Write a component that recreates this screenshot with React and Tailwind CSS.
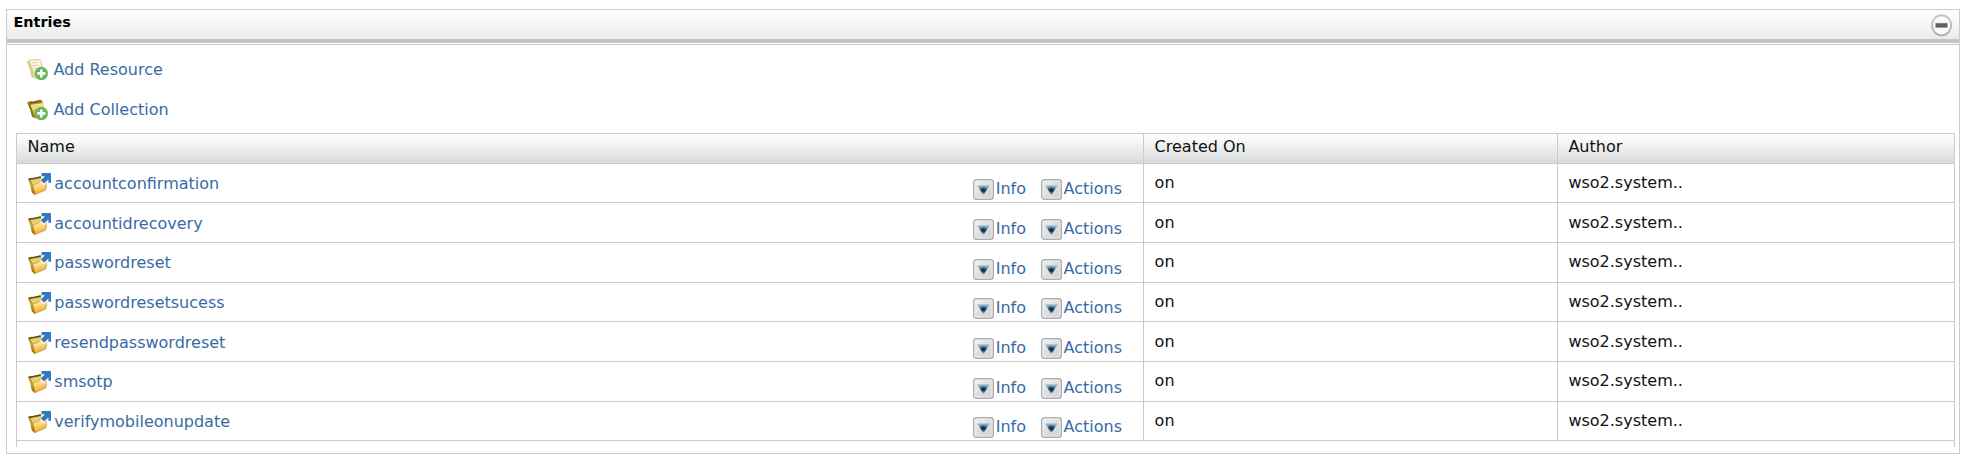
const entries = [
  'accountconfirmation',
  'accountidrecovery',
  'passwordreset',
  'passwordresetsucess',
  'resendpasswordreset',
  'smsotp',
  'verifymobileonupdate',
];

function PlusBadge() {
  return (
    <g>
      <circle cx="14.3" cy="14.4" r="6.7" fill="#64b958" />
      <path d="M14.3 10.4v8M10.3 14.4h8" stroke="#fff" strokeWidth="2.6" />
    </g>
  );
}

function ResourceIcon() {
  return (
    <svg width="21" height="21" viewBox="0 0 21 21" className="shrink-0">
      <defs>
        <linearGradient id="paper" x1="0" y1="0" x2="1" y2="1">
          <stop offset="0" stopColor="#f6edc2" />
          <stop offset="0.5" stopColor="#fdf6e4" />
          <stop offset="1" stopColor="#ead58c" />
        </linearGradient>
      </defs>
      <path d="M0.4 2.8L3 1.2L12 0.4L13.6 1.6L16 11L8.4 19.2L4.6 17.6L3.8 12Z" fill="url(#paper)" stroke="#d2bf86" strokeWidth="0.8" />
      <path d="M0.4 2.8L2.8 2.2L6.4 12L8 18.8L4.6 17.6L3.8 12Z" fill="#dccb8c" />
      <path d="M5 4l6-0.6M5.7 6.8l6-0.6M6.5 9.6l4-0.4" stroke="#eccaa8" strokeWidth="0.9" />
      <PlusBadge />
    </svg>
  );
}

function CollectionIcon() {
  return (
    <svg width="21" height="21" viewBox="0 0 21 21" className="shrink-0">
      <defs>
        <linearGradient id="collection" x1="0" y1="0" x2="0" y2="1">
          <stop offset="0" stopColor="#f3e28a" />
          <stop offset="0.6" stopColor="#dfb443" />
          <stop offset="1" stopColor="#b9801c" />
        </linearGradient>
      </defs>
      <path d="M0.2 3.2L4 1.8L6 2.4L13 0.4L15.5 2L16.4 10L8.2 19.2L5 17.6L3.4 11Z" fill="#b9952e" />
      <path d="M0.2 3.2L3.6 4.8L8.2 19.2L5 17.6L3.4 11Z" fill="#94731a" />
      <path d="M1.6 3.6L13.5 1.4L15 2.6L4.4 4.8Z" fill="#6b5614" />
      <path d="M3.6 6L16.8 4.2L16.4 11L8.2 19.2Z" fill="url(#collection)" />
      <path d="M4.2 6.6L16.4 4.8M5 9.2L15 7.8" stroke="#faf0b8" strokeWidth="0.9" />
      <PlusBadge />
    </svg>
  );
}

function FolderLinkIcon() {
  return (
    <svg width="23" height="22" viewBox="0 0 23 22" className="block shrink-0">
      <defs>
        <linearGradient id="folder" x1="0" y1="0" x2="0.2" y2="1">
          <stop offset="0" stopColor="#fff3c4" />
          <stop offset="0.45" stopColor="#fdda80" />
          <stop offset="1" stopColor="#f3a61a" />
        </linearGradient>
        <linearGradient id="folderBack" x1="0" y1="0" x2="0" y2="1">
          <stop offset="0" stopColor="#8f7a1c" />
          <stop offset="0.5" stopColor="#c9a638" />
          <stop offset="1" stopColor="#8a6410" />
        </linearGradient>
      </defs>
      <path d="M7 21.8L17.8 18L19.6 12L8 20Z" fill="#bdbdbd" opacity="0.7" />
      <path d="M0.1 5.8L3.6 4.8L5.2 5.4L12.8 3.2L14 9L6.8 22L3.8 19.6L2.4 13Z" fill="url(#folderBack)" />
      <path d="M2.4 7.2L12.8 5L14 10L5 12Z" fill="#e5d170" />
      <path d="M0.6 6.3L12.8 4" stroke="#5f4f12" strokeWidth="1.3" />
      <path d="M4.8 11.6L10 10.6L11.4 9L18.8 8L17.6 16.4L7 21.5Z" fill="url(#folder)" stroke="#c98c24" strokeWidth="0.6" />
      <path d="M12.8 0H23V11L20 8.4L16.2 12L12 8.4L15.4 4.4Z" fill="#fff" />
      <path d="M13.6 0H23V9.8H20.4V6.4L16.2 10.6L12.8 7.6L17 3.2H13.6Z" fill="#3079be" />
    </svg>
  );
}

function DropIcon() {
  return (
    <svg width="21" height="21" viewBox="0 0 21 21" className="block shrink-0">
      <defs>
        <linearGradient id="button" x1="0" y1="0" x2="1" y2="1">
          <stop offset="0" stopColor="#f4f4f4" />
          <stop offset="0.5" stopColor="#dedede" />
          <stop offset="1" stopColor="#d2d2d2" />
        </linearGradient>
        <radialGradient id="arrow" cx="0.5" cy="0.52" r="0.5">
          <stop offset="0" stopColor="#07121c" />
          <stop offset="0.35" stopColor="#27465c" />
          <stop offset="1" stopColor="#8fbad6" />
        </radialGradient>
      </defs>
      <rect x="0.7" y="0.7" width="19.6" height="19.6" rx="2.6" fill="url(#button)" stroke="#adadad" strokeWidth="1.4" />
      <rect x="2" y="2" width="17" height="17" rx="1.2" fill="none" stroke="#f0f0f0" strokeWidth="0.8" />
      <path d="M4.4 6.8H16.4L11 15.4H9.8Z" fill="url(#arrow)" />
      <path d="M4.8 7.2H16" stroke="#86b0cc" strokeWidth="1.2" />
    </svg>
  );
}

function CollapseIcon() {
  return (
    <svg width="22" height="23" viewBox="0 0 22 23" className="block">
      <defs>
        <linearGradient id="ring" x1="0" y1="0" x2="0" y2="1">
          <stop offset="0" stopColor="#c6c7c8" />
          <stop offset="1" stopColor="#a9abad" />
        </linearGradient>
      </defs>
      <ellipse cx="10.6" cy="11.3" rx="9.6" ry="10.1" fill="#f8fafb" stroke="url(#ring)" strokeWidth="1.9" />
      <rect x="4" y="8.8" width="13" height="5.2" rx="0.8" fill="#b5b7b9" />
      <rect x="4.9" y="9.4" width="11.2" height="3.9" fill="#606163" />
    </svg>
  );
}

function MenuLink({ label }) {
  return (
    <a className="flex items-start">
      <DropIcon />
      <span className="ml-0.5">{label}</span>
    </a>
  );
}

export default function App() {
  return (
    <div className="h-[462px] w-[1966px] bg-white pl-1.5 pt-[9px] font-['DejaVu_Sans',sans-serif] text-[16px] leading-5 text-[#111]">
      <section className="h-[445px] w-[1954px] border border-[#cbcbcb]">
        <header className="flex h-[33px] justify-between border-b-4 border-[#c3c4c6] bg-linear-to-b from-white to-[#ebebeb] pl-[6.5px] pr-[6px]">
          <h2 className="pt-[2px] text-[14.4px] font-bold text-black">Entries</h2>
          <div className="pt-1"><CollapseIcon /></div>
        </header>
        <div className="mt-px h-[409px] border-t border-[#cbcbcb] pl-[9px]">
          <div className="flex h-[88px] flex-col gap-[19px] pl-[11px] pt-3.5 text-[#386ba4]">
            <a className="flex h-[21px] gap-[5.4px]"><ResourceIcon /><span className="pt-px">Add Resource</span></a>
            <a className="flex h-[21px] gap-[5.4px]"><CollectionIcon /><span className="pt-px">Add Collection</span></a>
          </div>
          <div className="h-[314px] w-[1939px] border-x border-t border-[#cbcbcb]">
            <div className="grid h-[28.7px] grid-cols-[1126px_414px_1fr] bg-linear-to-b from-white via-[#f0f2f2] via-40% to-[#d9dadc]">
              <div className="pl-[10.6px] pt-[3px]">Name</div>
              <div className="border-l border-[#cbcbcb] pl-[10.6px] pt-[3px]">Created On</div>
              <div className="border-l border-[#cbcbcb] pl-[10.4px] pt-[3px]">Author</div>
            </div>
            {entries.map((name) => (
              <div key={name} className="grid h-[39.667px] grid-cols-[1126px_414px_1fr] border-t border-[#cbcbcb]">
                <div className="flex justify-between pl-[11px] pr-[21px] text-[#386ba4]">
                  <a className="flex gap-[3.3px] pt-[9.2px]"><FolderLinkIcon /><span className="pt-px">{name}</span></a>
                  <div className="flex gap-[14.6px] pt-[15.6px]">
                    <MenuLink label="Info" />
                    <MenuLink label="Actions" />
                  </div>
                </div>
                <div className="border-l border-[#cbcbcb] pl-[10.6px] pt-[9.2px]">on</div>
                <div className="border-l border-[#cbcbcb] pl-[10.4px] pt-[9.2px]">wso2.system..</div>
              </div>
            ))}
            <div className="border-t border-[#cbcbcb]" />
          </div>
        </div>
      </section>
    </div>
  );
}
